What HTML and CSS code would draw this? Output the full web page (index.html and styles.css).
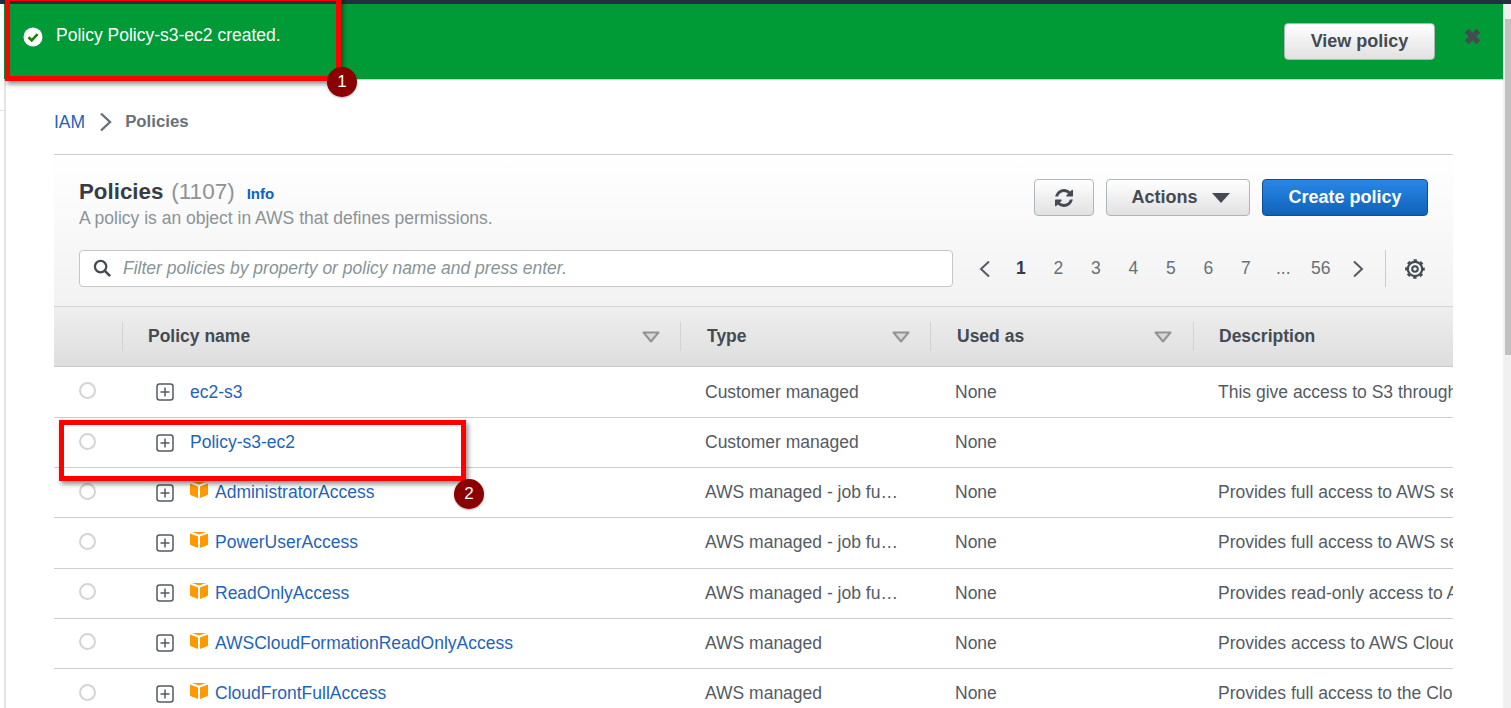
FILE: index.html
```html
<!DOCTYPE html>
<html lang="en">
<head>
<meta charset="utf-8">
<title>Policies</title>
<link rel="stylesheet" href="styles.css">
</head>
<body>
<svg class="defs" width="0" height="0" aria-hidden="true">
  <symbol id="plus" viewBox="0 0 18 18"><rect x="1" y="1" width="16" height="16" rx="2.5" fill="none" stroke="#545b64" stroke-width="1.5"/><path d="M9 4.500v9M4.500 9h9" stroke="#545b64" stroke-width="1.5" fill="none"/></symbol>
  <symbol id="cube" viewBox="0 0 20 20"><path d="M10 0.500 17 3 10 5.600 3 3Z" fill="#ff9900"/><path d="M1 4.500 9 7.500V19L2.500 16.600 1 15.500Z" fill="#ff9900"/><path d="M19 4.500 11 7.500V19L17.500 16.600 19 15.500Z" fill="#ff9900"/></symbol>
  <symbol id="sort" viewBox="0 0 18 12"><path d="M1.500 1.500h15L9 10.500Z" fill="#d8d8d8" stroke="#939393" stroke-width="2" stroke-linejoin="round"/></symbol>
</svg>
<div class="topbar"></div>
<div class="layout">
  <div class="page">
    <div class="flash">
      <div class="flash-msg">
        <svg class="ok" viewBox="0 0 20 20"><circle cx="10" cy="10" r="9.500" fill="#fff"/><path d="M5.500 10.300 8.700 13.400 14.600 7.200" fill="none" stroke="#1d8102" stroke-width="2.600"/></svg>
        <span>Policy Policy-s3-ec2 created.</span>
      </div>
      <button class="btn view">View policy</button>
      <svg class="close" viewBox="0 0 16 16"><path d="M2.500 2.500 13.500 13.500M13.500 2.500 2.500 13.500" stroke="#444b53" stroke-width="5" fill="none"/></svg>
    </div>
    <main class="main">
      <nav class="crumbs">
        <a class="link">IAM</a>
        <svg class="crumb-sep" viewBox="0 0 13 20"><path d="M2 1.500 11 10 2 18.500" fill="none" stroke="#687078" stroke-width="2.400"/></svg>
        <b>Policies</b>
      </nav>
      <section class="panel">
        <header class="panel-head">
          <div class="head-top">
            <div class="titles">
              <div class="title-line"><h1>Policies</h1><span class="count">(1107)</span><a class="info">Info</a></div>
              <p class="sub">A policy is an object in AWS that defines permissions.</p>
            </div>
            <div class="actions">
              <button class="btn refresh" aria-label="Refresh">
                <svg viewBox="128 128 1536 1536" width="18" height="18"><path fill="#444b53" d="M1639 1056q0 5-1 7-64 268-268 434.500t-478 166.500q-146 0-282.500-55t-243.500-157l-129 129q-19 19-45 19t-45-19-19-45v-448q0-26 19-45t45-19h448q26 0 45 19t19 45-19 45l-137 137q71 66 161 102t187 36q134 0 250-65t186-179q11-17 53-117 8-23 30-23h192q13 0 22.500 9.500t9.500 22.500zm25-800v448q0 26-19 45t-45 19h-448q-26 0-45-19t-19-45 19-45l138-138q-148-137-349-137-134 0-250 65t-186 179q-11 17-53 117-8 23-30 23h-199q-13 0-22.500-9.500t-9.500-22.500v-7q65-268 270-434.500t480-166.500q146 0 284 55.500t245 156.500l130-129q19-19 45-19t45 19 19 45z"/></svg>
              </button>
              <button class="btn act">Actions<svg class="caret" viewBox="0 0 18 10" width="18" height="10"><path d="M0 0h18L9 10Z" fill="#444b53"/></svg></button>
              <button class="btn primary">Create policy</button>
            </div>
          </div>
          <div class="head-bottom">
            <div class="search">
              <svg viewBox="0 0 20 20" width="19" height="19"><circle cx="8" cy="8" r="6" fill="none" stroke="#444b53" stroke-width="2.400"/><path d="M12.500 12.500 18 18" stroke="#444b53" stroke-width="2.800"/></svg>
              <span>Filter policies by property or policy name and press enter.</span>
            </div>
            <div class="pager">
              <svg class="chev" viewBox="0 0 12 18"><path d="M10 1.500 2 9 10 16.500" fill="none" stroke="#545b64" stroke-width="2"/></svg>
              <b class="page-n">1</b><span class="page-n">2</span><span class="page-n">3</span><span class="page-n">4</span><span class="page-n">5</span><span class="page-n">6</span><span class="page-n">7</span><span class="page-n">...</span><span class="page-n">56</span>
              <svg class="chev chev-next" viewBox="0 0 12 18"><path d="M2 1.500 10 9 2 16.500" fill="none" stroke="#545b64" stroke-width="2"/></svg>
              <i class="pager-sep"></i>
              <svg class="gear" viewBox="0 0 20 20" width="20" height="20"><circle cx="10" cy="10" r="7.200" fill="none" stroke="#444b53" stroke-width="2.200"/><circle cx="10" cy="10" r="8.800" fill="none" stroke="#444b53" stroke-width="2" stroke-dasharray="3.400 3.510" stroke-dashoffset="1.700"/><circle cx="10" cy="10" r="2.800" fill="none" stroke="#444b53" stroke-width="2"/></svg>
            </div>
          </div>
        </header>
        <div class="thead row-grid">
          <div class="th"></div>
          <div class="th"><span>Policy name</span><svg class="sort"><use href="#sort"/></svg></div>
          <div class="th th-shift"><span>Type</span><svg class="sort"><use href="#sort"/></svg></div>
          <div class="th th-shift"><span>Used as</span><svg class="sort"><use href="#sort"/></svg></div>
          <div class="th"><span>Description</span></div>
        </div>
        <div class="row row-grid">
          <div class="cell"><i class="radio"></i></div>
          <div class="cell name"><svg class="plus"><use href="#plus"/></svg><a class="link">ec2-s3</a></div>
          <div class="cell">Customer managed</div><div class="cell">None</div><div class="cell">This give access to S3 through EC2</div>
        </div>
        <div class="row row-grid">
          <div class="cell"><i class="radio"></i></div>
          <div class="cell name"><svg class="plus"><use href="#plus"/></svg><a class="link">Policy-s3-ec2</a></div>
          <div class="cell">Customer managed</div><div class="cell">None</div><div class="cell"></div>
        </div>
        <div class="row row-grid">
          <div class="cell"><i class="radio"></i></div>
          <div class="cell name"><svg class="plus"><use href="#plus"/></svg><svg class="cube"><use href="#cube"/></svg><a class="link">AdministratorAccess</a></div>
          <div class="cell">AWS managed - job fu…</div><div class="cell">None</div><div class="cell">Provides full access to AWS services</div>
        </div>
        <div class="row row-grid">
          <div class="cell"><i class="radio"></i></div>
          <div class="cell name"><svg class="plus"><use href="#plus"/></svg><svg class="cube"><use href="#cube"/></svg><a class="link">PowerUserAccess</a></div>
          <div class="cell">AWS managed - job fu…</div><div class="cell">None</div><div class="cell">Provides full access to AWS services</div>
        </div>
        <div class="row row-grid">
          <div class="cell"><i class="radio"></i></div>
          <div class="cell name"><svg class="plus"><use href="#plus"/></svg><svg class="cube"><use href="#cube"/></svg><a class="link">ReadOnlyAccess</a></div>
          <div class="cell">AWS managed - job fu…</div><div class="cell">None</div><div class="cell">Provides read-only access to AWS</div>
        </div>
        <div class="row row-grid">
          <div class="cell"><i class="radio"></i></div>
          <div class="cell name"><svg class="plus"><use href="#plus"/></svg><svg class="cube"><use href="#cube"/></svg><a class="link">AWSCloudFormationReadOnlyAccess</a></div>
          <div class="cell">AWS managed</div><div class="cell">None</div><div class="cell">Provides access to AWS CloudFormation</div>
        </div>
        <div class="row row-grid">
          <div class="cell"><i class="radio"></i></div>
          <div class="cell name"><svg class="plus"><use href="#plus"/></svg><svg class="cube"><use href="#cube"/></svg><a class="link">CloudFrontFullAccess</a></div>
          <div class="cell">AWS managed</div><div class="cell">None</div><div class="cell">Provides full access to the CloudFront</div>
        </div>
      </section>
    </main>
  </div>
  <div class="scrollbar"><div class="thumb"></div></div>
</div>
<div class="edge-tick"></div>
<div class="mark mark-1"></div>
<div class="badge badge-1">1</div>
<div class="mark mark-2"></div>
<div class="badge badge-2">2</div>
</body>
</html>
```

FILE: styles.css
```css
* { box-sizing: border-box; }
html, body { margin: 0; height: 100%; overflow: hidden; }
body { font-family: "Liberation Sans", Arial, sans-serif; font-size: 17.5px; color: #444b53; background: #fff; position: relative; }
.defs { position: absolute; }
.topbar { height: 4px; background: #232f3e; }
.layout { display: flex; height: 704px; }
.page { flex: 1; min-width: 0; overflow: hidden; margin-left: 4px; display: flex; flex-direction: column; }
.flash { height: 76px; flex: none; background: #009a36; border-bottom: 1px solid #c3cfc8; display: flex; align-items: flex-start; padding-left: 19px; color: #fff; }
.flash-msg { display: flex; align-items: center; gap: 13px; margin-top: 20px; flex: 1; }
.ok { width: 20px; height: 20px; margin-top: 3px; }
.btn { font-family: inherit; font-weight: 700; font-size: 18px; color: #444b53; border: 1px solid #aab7b8; border-radius: 4px; background: linear-gradient(#fff, #e1e1e1); padding: 0; height: 37px; display: flex; align-items: center; justify-content: center; }
.view { width: 151px; margin-top: 19px; }
.close { width: 17px; height: 17px; margin: 24px 22px 0 29px; flex: none; }
.main { flex: 1; padding: 0 50px 0 48px; border-left: 2px solid #e2e5e5; }
.crumbs { height: 75px; display: flex; align-items: center; border-bottom: 1px solid #cfcfcf; padding-top: 10px; font-size: 17.5px; }
.crumbs b { color: #687078; font-size: 16.8px; }
.link { color: #1f64b8; }
.crumb-sep { width: 13px; height: 20px; margin: 0 13px 0 14px; }
.panel { display: flex; flex-direction: column; }
.panel-head { height: 152px; background: linear-gradient(#fff, #f2f2f2); padding: 23px 25px 0; border-bottom: 1px solid #d5d5d5; }
.head-top { display: flex; justify-content: space-between; height: 72px; }
.titles { padding-top: 1px; }
.title-line { display: flex; align-items: baseline; height: 27px; }
h1 { margin: 0; font-size: 22.3px; font-weight: 700; color: #363c44; }
.count { font-size: 22.5px; color: #8c9396; margin-left: 8px; }
.info { font-size: 15px; font-weight: 700; color: #0a63c0; margin-left: 12px; }
.sub { margin: 2px 0 0; font-size: 17.5px; color: #8c9396; }
.actions { display: flex; gap: 12px; padding-top: 1px; }
.refresh { width: 60px; }
.act { width: 144px; gap: 14px; padding-left: 5px; }
.primary { width: 166px; color: #fff; background: linear-gradient(#2a87e6, #0f62b8); border-color: #0b4f99; }
.head-bottom { display: flex; align-items: center; }
.search { width: 874px; height: 37px; background: #fff; border: 1px solid #c6c6c6; border-radius: 4px; display: flex; align-items: center; gap: 11px; padding-left: 13px; font-style: italic; color: #879596; }
.pager { display: flex; align-items: center; margin-left: 26px; }
.chev { width: 12px; height: 18px; }
.chev-next { margin-left: 12px; }
.page-n { width: 37.5px; text-align: center; color: #687078; }
b.page-n { color: #363c44; margin-left: 11px; }
.pager-sep { width: 1px; height: 37px; background: #ccc; margin: 0 19px 0 21px; }
.row-grid { display: grid; grid-template-columns: 68px 558px 250px 263px 260px; }
.thead { height: 60px; margin-bottom: .8px; background: linear-gradient(#eeeeee, #dedede); border-bottom: 1px solid #c9c9c9; font-weight: 700; align-items: center; }
.th { height: 29px; display: flex; align-items: center; justify-content: space-between; padding: 0 20px 0 25px; border-left: 1px solid #d2d2d2; color: #444b53; }
.th:first-child { border-left: 0; }
.th-shift { padding-left: 26px; }
.th-shift:nth-child(4) { padding-right: 21px; }
.sort { width: 18px; height: 12px; }
.row { height: 50.2px; border-bottom: 1px solid #cfcfcf; align-items: center; overflow: hidden; }
.cell { padding-left: 25px; white-space: nowrap; overflow: hidden; color: #545b64; }
.cell:first-child { display: flex; overflow: visible; }
.name { display: flex; align-items: center; padding-left: 34px; }
.radio { width: 17px; height: 17px; border: 2px solid #d2d4d5; border-radius: 50%; background: #fff; margin-top: -3px; }
.plus { width: 18px; height: 18px; margin-right: 16px; flex: none; }
.cube { width: 20px; height: 20px; margin: -7px 6px 0 -1px; flex: none; }
.scrollbar { width: 8px; background: #f0f0f0; padding: 15px 0 0 2px; }
.thumb { height: 336px; background: #c1c1c1; }
.edge-tick { position: absolute; left: 0; top: 110px; width: 4px; height: 1px; background: #e3e3e3; }
.mark { position: absolute; border: 5px solid #ff0000; box-shadow: 2px 3px 5px rgba(0,0,0,.45); }
.mark-1 { left: 5px; top: -4px; width: 336px; height: 85px; }
.mark-2 { left: 59px; top: 420px; width: 407px; height: 61px; }
.badge { position: absolute; width: 30px; height: 30px; border-radius: 50%; background: #8b0000; color: #fff; display: flex; align-items: center; justify-content: center; font-size: 17px; box-shadow: 0 1px 2px rgba(0,0,0,.3); }
.badge-1 { left: 327px; top: 67px; }
.badge-2 { left: 454px; top: 479px; }
```
